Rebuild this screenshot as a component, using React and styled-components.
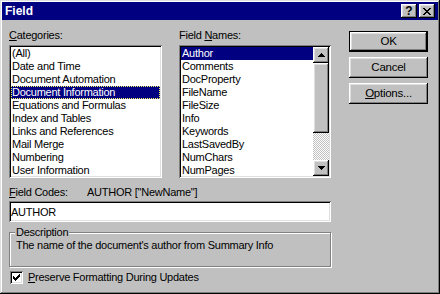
import React from 'react';
import styled, { createGlobalStyle, css } from 'styled-components';

const Global = createGlobalStyle`
  html, body { margin: 0; padding: 0; background: #c0c0c0; }
  body { font-family: "Liberation Sans", Arial, sans-serif; font-size: 11px; color: #000; letter-spacing: -0.25px; }
  * { box-sizing: border-box; }
`;

const raised = css`
  box-shadow: inset -1px -1px #000, inset 1px 1px #fff, inset -2px -2px #808080, inset 2px 2px #dfdfdf;
`;
const sunken = css`
  box-shadow: inset 1px 1px #808080, inset -1px -1px #fff, inset 2px 2px #000, inset -2px -2px #dfdfdf;
`;

const Window = styled.div`
  width: 440px;
  height: 294px;
  background: #c0c0c0;
  padding: 2px;
  box-shadow: inset -1px -1px #000, inset 1px 1px #dfdfdf, inset -2px -2px #808080, inset 2px 2px #fff;
  display: flex;
  flex-direction: column;
`;

const TitleBar = styled.div`
  height: 18px;
  background: #000080;
  color: #fff;
  display: flex;
  align-items: center;
  padding: 0 3px 0 3px;
  gap: 2px;
`;

const Title = styled.div`
  flex: 1;
  font-weight: bold;
  font-size: 12px;
  letter-spacing: 0;
  line-height: 18px;
`;

const CaptionButton = styled.div`
  width: 16px;
  height: 14px;
  background: #c0c0c0;
  color: #000;
  ${raised};
  display: flex;
  align-items: center;
  justify-content: center;
  font-weight: bold;
  font-size: 12px;
  letter-spacing: 0;
  line-height: 14px;
`;

const Body = styled.div`
  flex: 1;
  display: flex;
  padding: 9px 10px 0 7px;
`;

const Main = styled.div`
  width: 322px;
  display: flex;
  flex-direction: column;
`;

const ListsRow = styled.div`
  display: flex;
  gap: 17px;
`;

const Column = styled.div`
  width: ${(p) => p.$w}px;
  display: flex;
  flex-direction: column;
`;

const Label = styled.div`
  height: 13px;
  line-height: 13px;
  margin-bottom: 3px;
  white-space: nowrap;
`;

const U = styled.span`
  text-decoration: underline;
  text-underline-offset: 1px;
`;

const ListBox = styled.div`
  height: 133px;
  background: #fff;
  ${sunken};
  padding: 2px;
  display: flex;
  overflow: hidden;
`;

const Items = styled.div`
  flex: 1;
  display: flex;
  flex-direction: column;
`;

const Item = styled.div`
  height: 13px;
  line-height: 13px;
  padding-left: 1px;
  white-space: nowrap;
  background: ${(p) => (p.$sel ? '#000080' : 'transparent')};
  color: ${(p) => (p.$sel ? '#fff' : '#000')};
  outline: ${(p) => (p.$focus ? '1px dotted #ffff60' : 'none')};
  outline-offset: -1px;
`;

const ScrollBar = styled.div`
  width: 16px;
  display: flex;
  flex-direction: column;
`;

const ScrollButton = styled.div`
  width: 16px;
  height: 16px;
  background: #c0c0c0;
  ${raised};
  display: flex;
  align-items: center;
  justify-content: center;
`;

const Thumb = styled.div`
  width: 16px;
  height: 70px;
  background: #c0c0c0;
  ${raised};
`;

const Track = styled.div`
  flex: 1;
  background-color: #c0c0c0;
  background-image: conic-gradient(#fff 25%, #c0c0c0 0 50%, #fff 0 75%, #c0c0c0 0);
  background-size: 2px 2px;
`;

const CodesRow = styled.div`
  margin-top: 8px;
  height: 13px;
  line-height: 13px;
  display: flex;
  white-space: nowrap;
`;

const CodesLabel = styled.div`
  width: 78px;
`;

const Input = styled.div`
  margin-top: 2px;
  height: 21px;
  background: #fff;
  ${sunken};
  display: flex;
  align-items: center;
  padding: 1px 2px 0 2px;
`;

const Group = styled.div`
  position: relative;
  margin-top: 10px;
  height: 35px;
  border: 1px solid #808080;
  box-shadow: inset 1px 1px #fff, 1px 1px #fff;
  padding: 6px 0 0 6px;
  line-height: 13px;
  white-space: nowrap;
`;

const Legend = styled.div`
  position: absolute;
  top: -7px;
  left: 5px;
  padding: 0 1px;
  line-height: 13px;
  background: #c0c0c0;
`;

const CheckRow = styled.div`
  margin-top: 4px;
  height: 13px;
  display: flex;
  align-items: center;
  gap: 5px;
  padding-left: 1px;
  line-height: 13px;
`;

const CheckBox = styled.div`
  width: 13px;
  height: 13px;
  background: #fff;
  ${sunken};
  display: flex;
  align-items: center;
  justify-content: center;
`;

const Buttons = styled.div`
  margin-left: 18px;
  width: 79px;
  padding-top: 2px;
  display: flex;
  flex-direction: column;
  gap: 5px;
`;

const Button = styled.div`
  height: 21px;
  background: #c0c0c0;
  display: flex;
  align-items: center;
  justify-content: center;
  line-height: 13px;
  font-size: 11.5px;
  ${(p) =>
    p.$default
      ? css`
          box-shadow: inset 0 0 0 1px #000, inset -2px -2px #000, inset 2px 2px #fff,
            inset -3px -3px #808080, inset 3px 3px #dfdfdf;
        `
      : raised};
`;

const Arrow = ({ down }) => (
  <svg width="7" height="4" viewBox="0 0 7 4" shapeRendering="crispEdges">
    {down ? (
      <path d="M0 0h7v1H0zM1 1h5v1H1zM2 2h3v1H2zM3 3h1v1H3z" fill="#000" />
    ) : (
      <path d="M3 0h1v1H3zM2 1h3v1H2zM1 2h5v1H1zM0 3h7v1H0z" fill="#000" />
    )}
  </svg>
);

const CloseGlyph = () => (
  <svg width="8" height="7" viewBox="0 0 8 7" shapeRendering="crispEdges">
    <path
      d="M0 0h2v1H0zM6 0h2v1H6zM1 1h2v1H1zM5 1h2v1H5zM2 2h4v1H2zM3 3h2v1H3zM2 4h4v1H2zM1 5h2v1H1zM5 5h2v1H5zM0 6h2v1H0zM6 6h2v1H6z"
      fill="#000"
    />
  </svg>
);

const Check = () => (
  <svg width="7" height="7" viewBox="0 0 7 7" shapeRendering="crispEdges">
    <path d="M6 0h1v3H6zM5 1h1v3H5zM4 2h1v3H4zM3 3h1v3H3zM2 4h1v3H2zM1 3h1v3H1zM0 2h1v3H0z" fill="#000" />
  </svg>
);

const categories = [
  '(All)',
  'Date and Time',
  'Document Automation',
  'Document Information',
  'Equations and Formulas',
  'Index and Tables',
  'Links and References',
  'Mail Merge',
  'Numbering',
  'User Information',
];

const fieldNames = [
  'Author',
  'Comments',
  'DocProperty',
  'FileName',
  'FileSize',
  'Info',
  'Keywords',
  'LastSavedBy',
  'NumChars',
  'NumPages',
];

export default function App() {
  return (
    <>
      <Global />
      <Window>
        <TitleBar>
          <Title>Field</Title>
          <CaptionButton>?</CaptionButton>
          <CaptionButton>
            <CloseGlyph />
          </CaptionButton>
        </TitleBar>
        <Body>
          <Main>
            <ListsRow>
              <Column $w={153}>
                <Label>
                  <U>C</U>ategories:
                </Label>
                <ListBox>
                  <Items>
                    {categories.map((c, i) => (
                      <Item key={c} $sel={i === 3} $focus={i === 3}>
                        {c}
                      </Item>
                    ))}
                  </Items>
                </ListBox>
              </Column>
              <Column $w={152}>
                <Label>
                  Field <U>N</U>ames:
                </Label>
                <ListBox>
                  <Items>
                    {fieldNames.map((c, i) => (
                      <Item key={c} $sel={i === 0}>
                        {c}
                      </Item>
                    ))}
                  </Items>
                  <ScrollBar>
                    <ScrollButton>
                      <Arrow />
                    </ScrollButton>
                    <Thumb />
                    <Track />
                    <ScrollButton>
                      <Arrow down />
                    </ScrollButton>
                  </ScrollBar>
                </ListBox>
              </Column>
            </ListsRow>
            <CodesRow>
              <CodesLabel>
                <U>F</U>ield Codes:
              </CodesLabel>
              <div>AUTHOR ["NewName"]</div>
            </CodesRow>
            <Input>AUTHOR</Input>
            <Group>
              <Legend>Description</Legend>
              The name of the document's author from Summary Info
            </Group>
            <CheckRow>
              <CheckBox>
                <Check />
              </CheckBox>
              <span>
                <U>P</U>reserve Formatting During Updates
              </span>
            </CheckRow>
          </Main>
          <Buttons>
            <Button $default>OK</Button>
            <Button>Cancel</Button>
            <Button>
              <span>
                <U>O</U>ptions...
              </span>
            </Button>
          </Buttons>
        </Body>
      </Window>
    </>
  );
}
